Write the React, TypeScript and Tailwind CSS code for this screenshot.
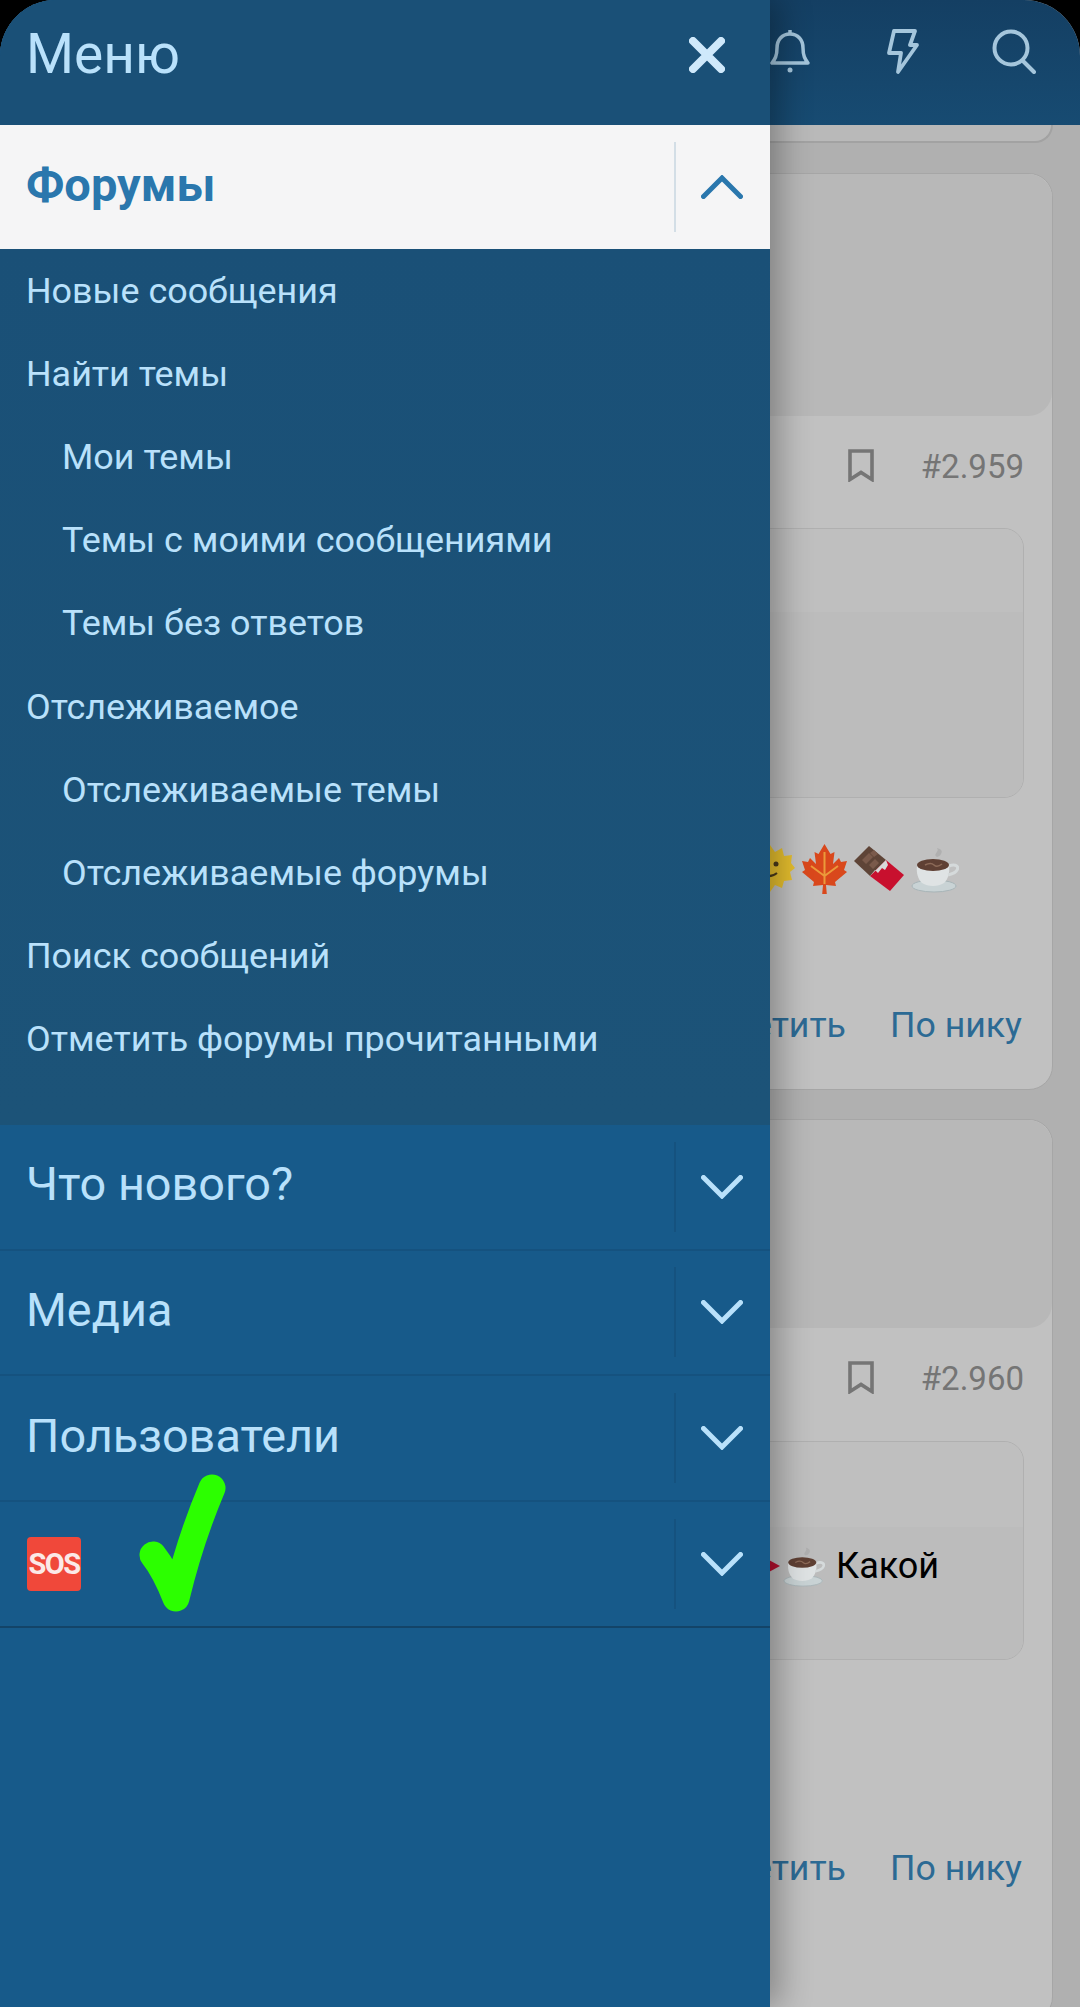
import React from "react";

const Chevron = ({ up, color }: { up?: boolean; color: string }) => (
  <svg width="42" height="24" viewBox="0 0 42 24" fill="none" stroke={color} strokeWidth="5" strokeLinecap="round" strokeLinejoin="miter">
    {up ? <path d="M2.500 21.500 21 3 39.500 21.500" /> : <path d="M2.500 2.500 21 21 39.500 2.500" />}
  </svg>
);

const Bookmark = () => (
  <svg width="26" height="33" viewBox="0 0 26 33" fill="none" stroke="#757575" strokeWidth="3.600" strokeLinejoin="miter" className="shrink-0">
    <path d="M2 2h22v28.500L13 23.500 2 30.500z" />
  </svg>
);

const Sun = () => (
  <svg width="50" height="50" viewBox="0 0 50 50" className="shrink-0">
    <path d="M25 1l5 7 7-4 2 8 8-1-1 8 4 5-5 4 2 8-8 1-2 7-7-3-5 7-5-7-7 3-2-7-8-1 2-8-5-4 4-5-1-8 8 1 2-8 7 4z" fill="#e6bf2e" />
    <circle cx="31" cy="20" r="2.500" fill="#4a3a1a" />
    <path d="M18 31q8 3 14-2" fill="none" stroke="#4a3a1a" strokeWidth="2" />
  </svg>
);

const Maple = () => (
  <svg width="45" height="50" viewBox="0 0 45 50" className="shrink-0">
    <path d="M22.500 0l6 10 4-2-1.500 12 6-6 2 4 6-1-3 9 3 2-12 10 1 4-10-1 .8 9h-4.600l.8-9-10 1 1-4L0 28l3-2-3-9 6 1 2-4 6 6L12.500 8l4 2z" fill="#d9481c" />
    <path d="M22.500 8v32M22.500 32L9 22M22.500 32L36 22" stroke="#eb9a3a" strokeWidth="2" fill="none" />
  </svg>
);

const Choc = () => (
  <svg width="50" height="50" viewBox="0 0 50 50" className="shrink-0">
    <path d="M0 17 15 2 32 16 16 32z" fill="#5e4437" />
    <path d="M8 16 15 9l4 4-7 7zM16 9l4-3 4 4-4 3zM15 21l6-6 4 4-6 6z" fill="#7a5a4b" />
    <path d="M16 32 32 16l18 15-14 16z" fill="#c8102e" />
    <path d="M16 32l5-6 3 3 4-5 3 2 3-5-2-5z" fill="#d8d8d8" />
  </svg>
);

const Coffee = ({ w = 48 }: { w?: number }) => (
  <svg width={w} height={w} viewBox="0 0 48 48" className="shrink-0">
    <path d="M26 12c-5-3 3-5 0-9 4 1 6 3 4 6-1 2-2 2-4 3z" fill="#b0b0b0" />
    <ellipse cx="23" cy="41" rx="22" ry="6" fill="#c9d3d5" stroke="#a8b5b8" />
    <path d="M6 20h32c1 8-1 14-5 18-6 4-16 4-22 0-4-4-6-10-5-18z" fill="#dfe3e4" />
    <path d="M38 21c7-3 10 1 8 4-1 3-5 4-9 5" fill="none" stroke="#d5dadb" strokeWidth="3" />
    <ellipse cx="22" cy="20" rx="16" ry="6" fill="#5f4034" />
    <path d="M14 20q6-3 9 0t8-1" stroke="#8c6a58" strokeWidth="1.500" fill="none" />
  </svg>
);

type CardProps = {
  top: string;
  meta: string;
  num: string;
  upper: string;
  lower: string;
  content?: React.ReactNode;
  emojis?: React.ReactNode;
  action: string;
};

const Card = ({ top, meta, num, upper, lower, content, emojis, action }: CardProps) => (
  <section className="ml-[28px] mr-[27px] rounded-[24px] border border-[#a6a6a6] bg-[#c1c1c1]">
    <div className={`${top} rounded-[24px] bg-[#b8b8b8]`} />
    <div className={`flex items-start justify-end pr-[28px] pt-[33px] ${meta}`}>
      <Bookmark />
      <span className="ml-[47px] text-[33px] leading-[36px] text-[#757575]">{num}</span>
    </div>
    <div className="mx-[28px] overflow-hidden rounded-[20px] border border-[#b0b0b0]">
      <div className={`${upper} bg-[#bfbfbf]`} />
      <div className={`${lower} bg-[#bcbcbc]`}>{content}</div>
    </div>
    {emojis}
    <div className={`flex items-start justify-end gap-[44px] pr-[30px] text-[35.700px] leading-[50px] text-[#2c6a94] ${action}`}>
      <span>Ответить</span>
      <span>По нику</span>
    </div>
  </section>
);

const Row = ({ label, last }: { label: React.ReactNode; last?: boolean }) => (
  <div className={`flex h-[125.700px] items-center border-b-2 pl-[26px] ${last ? "border-[#134468]" : "border-[#15527f]"}`}>
    <div className="flex-1 pb-[5px] text-[46.800px] leading-[56px] text-[#b9e1fb]">{label}</div>
    <div className="flex h-[90px] w-[96px] items-center justify-center border-l-2 border-[#15527f] pr-[2px]">
      <Chevron color="#b9e1fb" />
    </div>
  </div>
);

const sub: [string, boolean][] = [
  ["Новые сообщения", false],
  ["Найти темы", false],
  ["Мои темы", true],
  ["Темы с моими сообщениями", true],
  ["Темы без ответов", true],
  ["Отслеживаемое", false],
  ["Отслеживаемые темы", true],
  ["Отслеживаемые форумы", true],
  ["Поиск сообщений", false],
  ["Отметить форумы прочитанными", false],
];

export default function App() {
  return (
    <div className="h-[2007px] w-[1080px] overflow-hidden bg-black font-['Roboto',sans-serif]">
      <div className="relative h-[2007px] w-[1080px] overflow-hidden rounded-t-[56px] bg-[#b0b0b0]">
        <header className="flex h-[125px] items-start justify-end bg-gradient-to-b from-[#143f63] to-[#174b72] pr-[44px] pt-[29px]">
          <svg width="40" height="45" viewBox="0 0 40 45" fill="none" stroke="#a5c6dc" strokeWidth="3.500" strokeLinejoin="round">
            <path d="M20 5C12 5 7 11 7 19c0 8-2 11-5 15h36c-3-4-5-7-5-15 0-8-5-14-13-14z" />
            <path d="M20 1v4" />
            <circle cx="20" cy="41" r="2.500" fill="#a5c6dc" stroke="none" />
          </svg>
          <svg className="ml-[75px]" width="34" height="45" viewBox="0 0 34 45" fill="none" stroke="#a5c6dc" strokeWidth="3.800" strokeLinejoin="round">
            <path d="M9 2h21l-5 14h7L13 43l3-19H4z" />
          </svg>
          <svg className="ml-[73px]" width="44" height="45" viewBox="0 0 44 45" fill="none" stroke="#a5c6dc" strokeWidth="4" strokeLinecap="round">
            <circle cx="19" cy="19" r="16.500" />
            <path d="M31 32 42 43" />
          </svg>
        </header>

        <div className="ml-[28px] mr-[27px] h-[18px] rounded-b-[24px] border-b-2 border-r-2 border-[#a2a2a2] bg-[#b9b9b9]" />
        <div className="h-[30px]" />
        <Card
          top="h-[242px]"
          meta="h-[112px]"
          num="#2.959"
          upper="h-[83px]"
          lower="h-[185px]"
          emojis={
            <div className="mt-[46px] flex h-[50px] items-center gap-[7px] pl-[716px]">
              <Sun />
              <Maple />
              <Choc />
              <Coffee />
            </div>
          }
          action="h-[195px] pt-[106px]"
        />
        <div className="h-[29px]" />
        <Card
          top="h-[208px]"
          meta="h-[113px]"
          num="#2.960"
          upper="h-[85px]"
          lower="h-[132px]"
          content={
            <div className="flex h-[78px] items-center pl-[698px] text-[36px] text-black">
              <svg width="24" height="30" viewBox="0 0 24 30" className="shrink-0">
                <path d="M0 2 24 15 0 28z" fill="#b5102e" />
              </svg>
              <span className="ml-[3px]"><Coffee w={42} /></span>
              <span className="ml-[11px]">Какой</span>
            </div>
          }
          action="h-[360px] pt-[183px]"
        />

        <aside className="absolute inset-y-0 left-0 flex w-[770px] flex-col bg-[#175a8a] shadow-[10px_0_30px_rgba(0,0,0,0.3)]">
          <div className="flex h-[125px] items-start justify-between bg-[#1a5077] pl-[26px] pr-[45px] pt-[22px]">
            <span className="text-[55px] leading-[64px] text-[#b9e1fb]">Меню</span>
            <svg className="mt-[15px]" width="36" height="36" viewBox="0 0 36 36" stroke="#cfe9fb" strokeWidth="8" strokeLinecap="round">
              <path d="M4 4 32 32M32 4 4 32" />
            </svg>
          </div>
          <div className="flex h-[124px] items-center bg-[#f5f5f6] pl-[26px]">
            <span className="flex-1 pb-[5px] text-[47px] font-bold leading-[56px] text-[#2a77ad]">Форумы</span>
            <div className="flex h-[90px] w-[96px] items-center justify-center border-l-2 border-[#d3dee6] pr-[2px]">
              <Chevron up color="#2a77ad" />
            </div>
          </div>
          <nav className="bg-gradient-to-b from-[#1a5077] to-[#1c5378] pb-[44px]">
            {sub.map(([t, indent]) => (
              <div key={t} className={`flex h-[83.200px] items-center pt-[2px] text-[35.900px] text-[#b9e1fb] ${indent ? "pl-[62px]" : "pl-[26px]"}`}>
                {t}
              </div>
            ))}
          </nav>
          <Row label="Что нового?" />
          <Row label="Медиа" />
          <Row label="Пользователи" />
          <Row
            last
            label={
              <span className="ml-[1px] mt-[5px] flex h-[54px] w-[54px] items-center justify-center rounded-[4px] bg-[#f0483a] text-[29px] font-bold tracking-[-1.500px] text-[#fbe9e7]">
                SOS
              </span>
            }
          />
        </aside>

        <svg className="absolute left-[130px] top-[1470px]" width="100" height="150" viewBox="0 0 100 150" fill="none" stroke="#2cff00" strokeWidth="27" strokeLinecap="round" strokeLinejoin="round">
          <path d="M23 85 Q35 100 46 128 Q60 70 82 18" />
        </svg>
      </div>
    </div>
  );
}
